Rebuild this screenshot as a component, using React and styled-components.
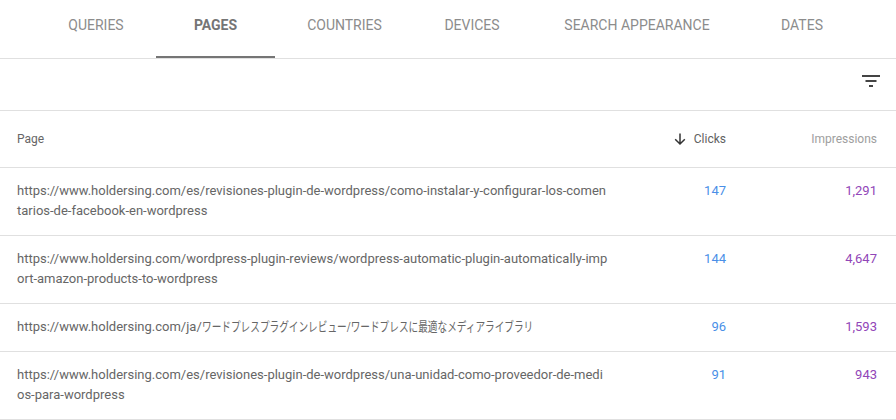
import React from 'react'
import styled, { createGlobalStyle } from 'styled-components'

const tabs = [
    { label: 'QUERIES', width: 120 },
    { label: 'PAGES', width: 119 },
    { label: 'COUNTRIES', width: 139 },
    { label: 'DEVICES', width: 116 },
    { label: 'SEARCH APPEARANCE', width: 214 },
    { label: 'DATES', width: 116 },
]

const rows = [
    {
        page: 'https://www.holdersing.com/es/revisiones-plugin-de-wordpress/como-instalar-y-configurar-los-comentarios-de-facebook-en-wordpress',
        clicks: '147',
        impressions: '1,291',
    },
    {
        page: 'https://www.holdersing.com/wordpress-plugin-reviews/wordpress-automatic-plugin-automatically-import-amazon-products-to-wordpress',
        clicks: '144',
        impressions: '4,647',
    },
    {
        page: 'https://www.holdersing.com/ja/',
        japanese: 'ワードプレスプラグインレビュー/ワードプレスに最適なメディアライブラリ',
        clicks: '96',
        impressions: '1,593',
    },
    {
        page: 'https://www.holdersing.com/es/revisiones-plugin-de-wordpress/una-unidad-como-proveedor-de-medios-para-wordpress',
        clicks: '91',
        impressions: '943',
    },
]

export default function App() {
    return (
        <>
            <GlobalStyle />
            <TabBar>
                {tabs.map((tab) => (
                    <Tab key={tab.label} $width={tab.width} $active={tab.label === 'PAGES'}>{tab.label}</Tab>
                ))}
            </TabBar>
            <Toolbar>
                <svg width="24" height="24" viewBox="0 0 24 24" fill="#444">
                    <path d="M3 6h18v2H3zM6.5 11h11v2h-11zM10 16h4v2h-4z" />
                </svg>
            </Toolbar>
            <HeaderRow>
                <PageCell>Page</PageCell>
                <ClicksHead>
                    <svg width="16" height="16" viewBox="0 0 16 16" fill="none" stroke="#333" strokeWidth="1.5">
                        <path d="M8 2.5v10.5M3.2 8.2 8 13l4.8-4.8" />
                    </svg>
                    Clicks
                </ClicksHead>
                <ImpressionsHead>Impressions</ImpressionsHead>
            </HeaderRow>
            {rows.map((row) => (
                <Row key={row.page + row.clicks}>
                    <PageCell>
                        {row.page}
                        {row.japanese && <Japanese>{row.japanese}</Japanese>}
                    </PageCell>
                    <ClicksCell>{row.clicks}</ClicksCell>
                    <ImpressionsCell>{row.impressions}</ImpressionsCell>
                </Row>
            ))}
        </>
    )
}

const GlobalStyle = createGlobalStyle`
  body {
    margin: 0;
    background: #fff;
    font-family: Roboto, "Noto Sans CJK JP", sans-serif;
    overflow: hidden;
  }
`

const TabBar = styled.div`
  display: flex;
  justify-content: center;
  height: 58px;
  border-bottom: 1px solid #e0e0e0;
`

const Tab = styled.div`
  width: ${({ $width }) => $width}px;
  box-sizing: border-box;
  height: 58px;
  display: flex;
  justify-content: center;
  align-items: center;
  padding-bottom: 7px;
  font-size: 14px;
  color: ${({ $active }) => ($active ? '#757575' : '#8c8c8c')};
  font-weight: ${({ $active }) => ($active ? 700 : 400)};
  border-bottom: 2px solid ${({ $active }) => ($active ? '#757575' : 'transparent')};
`

const Toolbar = styled.div`
  display: flex;
  justify-content: flex-end;
  align-items: center;
  height: 52px;
  box-sizing: border-box;
  padding: 0 13px 8px 0;
  border-bottom: 1px solid #e0e0e0;
`

const Row = styled.div`
  display: flex;
  align-items: flex-start;
  padding: 13px 19px 14px 17px;
  line-height: 20px;
  font-size: 13px;
  border-bottom: 1px solid #e0e0e0;
`

const HeaderRow = styled(Row)`
  height: 57px;
  align-items: center;
  padding-top: 0;
  padding-bottom: 0;
  box-sizing: border-box;
  font-size: 12px;
`

const PageCell = styled.div`
  width: 591px;
  color: #666;
  word-break: break-all;
`

const Japanese = styled.span`
  display: inline-block;
  white-space: nowrap;
  transform: scaleX(0.742);
  transform-origin: left center;
  width: 340px;
`

const ClicksCell = styled.div`
  width: 118px;
  text-align: right;
  color: #4a8fe7;
`

const ClicksHead = styled.div`
  width: 118px;
  display: flex;
  justify-content: flex-end;
  align-items: center;
  gap: 6px;
  color: #616161;
`

const ImpressionsCell = styled.div`
  flex: 1;
  text-align: right;
  color: #9146b8;
`

const ImpressionsHead = styled(ImpressionsCell)`
  color: #9e9e9e;
`
